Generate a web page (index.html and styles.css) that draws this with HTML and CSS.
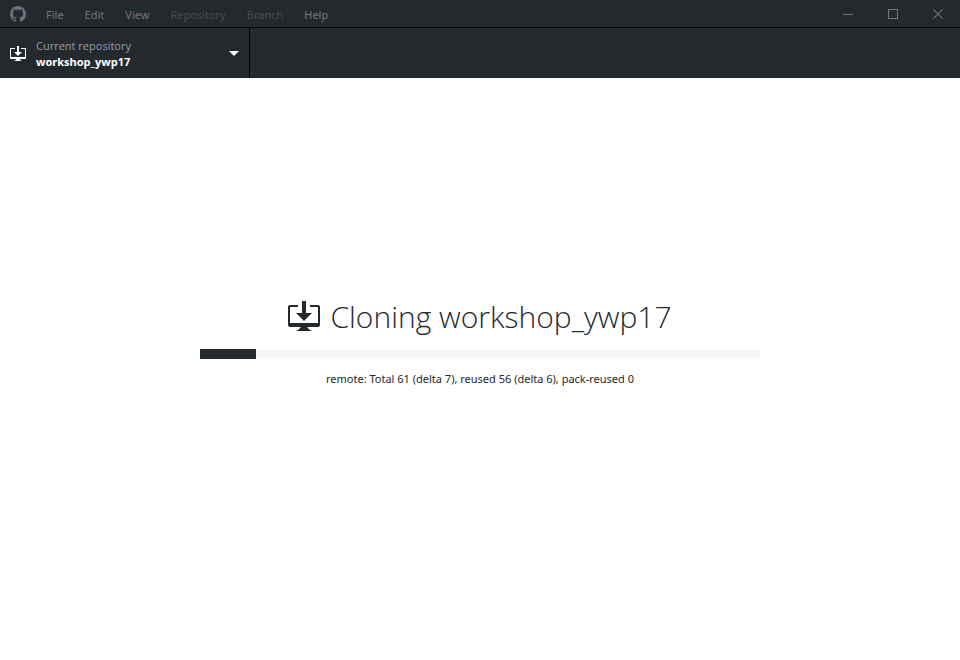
FILE: index.html
```html
<!DOCTYPE html>
<html lang="en">
<head>
<meta charset="utf-8">
<title>GitHub Desktop</title>
<link rel="stylesheet" href="styles.css">
</head>
<body>
<header class="titlebar">
  <svg class="logo" viewBox="0 0 16 16" aria-hidden="true"><path fill-rule="evenodd" d="M8 0C3.58 0 0 3.58 0 8c0 3.54 2.29 6.53 5.47 7.59.4.07.55-.17.55-.38 0-.19-.01-.82-.01-1.49-2.01.37-2.53-.49-2.69-.94-.09-.23-.48-.94-.82-1.13-.28-.15-.68-.52-.01-.53.63-.01 1.08.58 1.23.82.72 1.21 1.87.87 2.33.66.07-.52.28-.87.51-1.07-1.78-.2-3.64-.89-3.64-3.95 0-.87.31-1.59.82-2.15-.08-.2-.36-1.02.08-2.12 0 0 .67-.21 2.2.82.64-.18 1.32-.27 2-.27.68 0 1.36.09 2 .27 1.53-1.04 2.2-.82 2.2-.82.44 1.1.16 1.92.08 2.12.51.56.82 1.27.82 2.15 0 3.07-1.87 3.75-3.65 3.95.29.25.54.73.54 1.48 0 1.07-.01 1.93-.01 2.2 0 .21.15.46.55.38A8.013 8.013 0 0 0 16 8c0-4.42-3.58-8-8-8z"/></svg>
  <nav class="menu">
    <button type="button">File</button>
    <button type="button">Edit</button>
    <button type="button">View</button>
    <button type="button" disabled>Repository</button>
    <button type="button" disabled>Branch</button>
    <button type="button">Help</button>
  </nav>
  <div class="window-controls">
    <button type="button" aria-label="Minimize"><svg viewBox="0 0 10 10"><path d="M0 5h10v1H0z"/></svg></button>
    <button type="button" aria-label="Maximize"><svg viewBox="0 0 10 10"><path fill-rule="evenodd" d="M0 0h10v10H0zM1 1v8h8V1z"/></svg></button>
    <button type="button" aria-label="Close"><svg viewBox="0 0 10 10"><path d="M0 .7.7 0 5 4.3 9.3 0l.7.7L5.7 5 10 9.3l-.7.7L5 5.7.7 10 0 9.3 4.3 5z"/></svg></button>
  </div>
</header>
<div class="toolbar">
  <button type="button" class="repository">
    <svg class="icon" viewBox="0 0 16 16" aria-hidden="true"><path d="M4 6h3V0h2v6h3l-4 4-4-4zm11-4h-4v1h4v8H1V3h4V2H1c-.55 0-1 .45-1 1v9c0 .55.45 1 1 1h5.34c-.25.61-.86 1.39-2.34 2h8c-1.48-.61-2.09-1.39-2.34-2H15c.55 0 1-.45 1-1V3c0-.55-.45-1-1-1z"/></svg>
    <span class="label">
      <span class="description">Current repository</span>
      <span class="name">workshop_ywp17</span>
    </span>
    <svg class="arrow" viewBox="0 0 10 5" aria-hidden="true"><path d="M0 0l5 5 5-5z"/></svg>
  </button>
</div>
<main class="cloning">
  <h1 class="title">
    <svg class="title-icon" viewBox="0 0 16 16" aria-hidden="true"><path d="M4 6h3V0h2v6h3l-4 4-4-4zm11-4h-4v1h4v8H1V3h4V2H1c-.55 0-1 .45-1 1v9c0 .55.45 1 1 1h5.34c-.25.61-.86 1.39-2.34 2h8c-1.48-.61-2.09-1.39-2.34-2H15c.55 0 1-.45 1-1V3c0-.55-.45-1-1-1z"/></svg>
    <span>Cloning workshop_ywp17</span>
  </h1>
  <progress class="progress" value="10" max="100" aria-label="Clone progress"></progress>
  <p class="details">remote: Total 61 (delta 7), reused 56 (delta 6), pack-reused 0</p>
</main>
</body>
</html>
```
FILE: styles.css
```css
* {
  box-sizing: border-box;
}

body {
  margin: 0;
  min-height: 100vh;
  display: flex;
  flex-direction: column;
  background: #fff;
  color: #24292e;
  font: 11px/16px "Open Sans", "Noto Sans", sans-serif;
}

button {
  margin: 0;
  padding: 0;
  border: 0;
  background: none;
  color: inherit;
  font: inherit;
}

svg {
  display: block;
  flex: none;
  fill: currentColor;
}

.titlebar {
  display: flex;
  height: 28px;
  background: #24292e;
  border-bottom: 1px solid #000;
  color: #6a737d;
}

.logo {
  width: 16px;
  height: 16px;
  margin: 6px 10px 0 10px;
}

.menu {
  display: flex;
  gap: 1px;
}

.menu button {
  padding: 2px 10px 0;
  font-family: "Noto Sans", sans-serif;
  color: #73777b;
}

.menu button:disabled {
  color: #464b50;
}

.window-controls {
  display: flex;
  margin-left: auto;
  color: #73777b;
}

.window-controls button {
  display: flex;
  justify-content: center;
  align-items: center;
  width: 45px;
}

.window-controls svg {
  width: 10px;
  height: 10px;
}

.toolbar {
  display: flex;
  height: 50px;
  background: #24292e;
  border-bottom: 1px solid #1d2125;
}

.repository {
  display: flex;
  align-items: center;
  width: 250px;
  padding: 2px 10px 0;
  border-right: 1px solid #000;
  color: #fff;
  text-align: left;
}

.icon {
  width: 16px;
  height: 16px;
  margin-right: 10px;
}

.label {
  flex: 1;
}

.description,
.name {
  display: block;
}

.description {
  color: #959da5;
}

.name {
  font-weight: 700;
}

.arrow {
  width: 10px;
  height: 5px;
}

.cloning {
  flex: 1;
  display: flex;
  flex-direction: column;
  align-items: center;
  justify-content: center;
  padding: 0 20px 56px;
}

.title {
  display: flex;
  align-items: center;
  gap: 10px;
  margin: 0 0 10px;
  font-size: 30px;
  font-weight: 300;
  line-height: 44px;
}

.title-icon {
  width: 32px;
  height: 32px;
}

.progress {
  display: block;
  appearance: none;
  width: 100%;
  max-width: 560px;
  height: 10px;
  border: 0;
  background: #f6f8fa;
}

.progress::-webkit-progress-bar {
  background: #f6f8fa;
}

.progress::-webkit-progress-value {
  background: #24292e;
}

.details {
  margin: 12px 0 0;
  font-family: "Noto Sans", sans-serif;
}
```
